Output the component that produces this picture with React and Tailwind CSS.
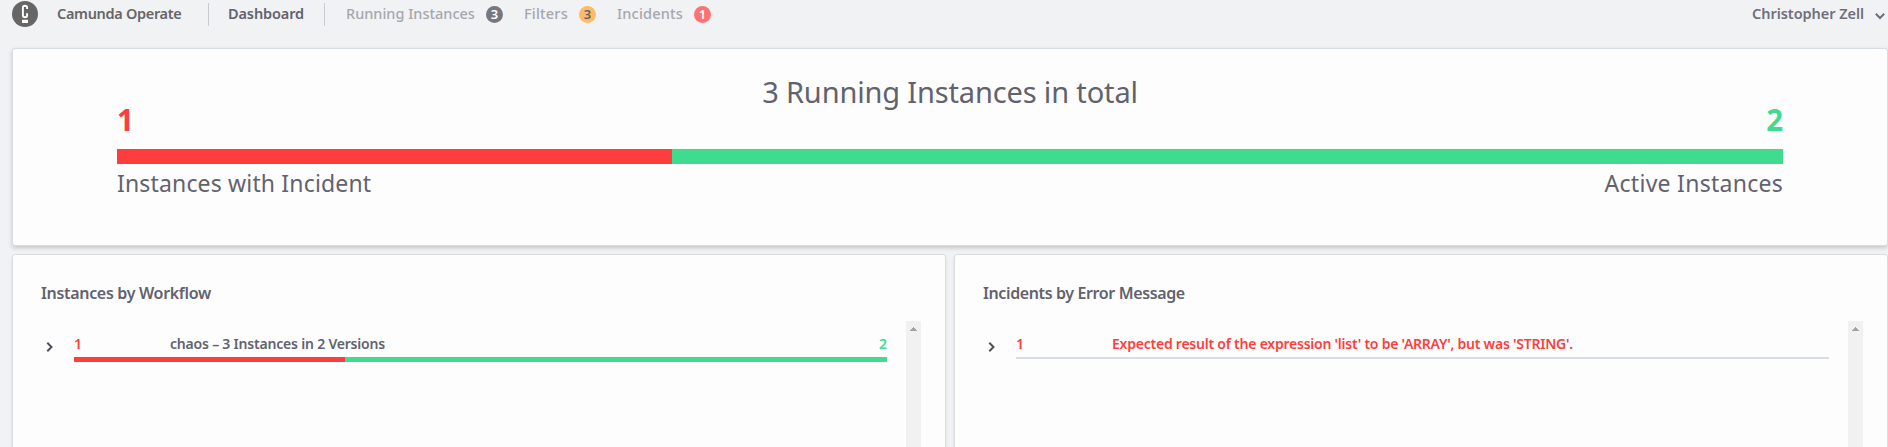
function Logo() {
  return (
    <svg className="ml-3 mt-px size-[26px] shrink-0" viewBox="0 0 26 26" fill="none">
      <circle cx="13" cy="13" r="13" fill="#666666" />
      <path d="M15.1 8V6.6C15.1 5.4 14.4 4.8 13 4.8S10.9 5.4 10.9 6.6V14.2c0 1.3.7 2 2.1 2s2.1-.7 2.1-2V12.2" stroke="#fff" strokeWidth="1.9" />
      <rect x="10" y="18.8" width="6" height="3.2" fill="#fff" />
    </svg>
  );
}

function Chevron({ className, down }) {
  return (
    <svg className={className} viewBox="0 0 10 10" fill="none" stroke="currentColor" strokeWidth="2">
      <path d={down ? "M0.8 2.8L5 7L9.2 2.8" : "M2.3 0.8L6.5 5L2.3 9.2"} />
    </svg>
  );
}

function NavItem({ label, count, width, badge, gap }) {
  return (
    <div className={`flex h-[27px] items-center text-[#a6a7ad] ${gap}`}>
      <span className={`font-medium whitespace-nowrap ${width}`}>{label}</span>
      <span className={`mt-[2px] flex size-[17px] items-center justify-center rounded-full text-[13px] leading-none font-semibold ${badge}`}>
        {count}
      </span>
    </div>
  );
}

function Scrollbar() {
  return (
    <div className="mt-[27px] flex h-[140px] w-[15px] justify-center bg-[#f1f1f1] pt-[6px]">
      <svg className="h-1 w-[7px]" viewBox="0 0 7 4" fill="#a3a3a3" shapeRendering="crispEdges">
        <path d="M3 0h1v1h1v1h1v1h1v1H0V3h1V2h1V1h1z" />
      </svg>
    </div>
  );
}

function Card({ title, titleClass, width, children }) {
  return (
    <section className={`h-[240px] rounded-[3px] border border-[#d8dce3] bg-[#fdfdfe] shadow-[0_2px_3px_rgba(0,0,0,0.1)] ${width}`}>
      <div className="flex pl-7">
        <div className="w-[865px] shrink-0 pt-[25px]">
          <h2 className={`h-[26px] text-base leading-[26px] font-semibold whitespace-nowrap ${titleClass}`}>{title}</h2>
          <div className="mt-[25px] flex pl-[4px]">
            <Chevron className="mt-[11px] mr-[19px] size-[10px] shrink-0 text-[#4f4f59]" />
            {children}
          </div>
        </div>
        <div className="flex pt-[39px]">
          <Scrollbar />
        </div>
      </div>
    </section>
  );
}

export default function App() {
  return (
    <div className="h-[447px] w-full overflow-hidden bg-[#f1f2f4] font-['Noto_Sans',sans-serif] text-[#62626e]">
      <header className="flex h-12 items-start text-[14.5px] leading-[27px]">
        <Logo />
        <span className="ml-[19px] w-[151px] font-semibold tracking-[-0.32px] whitespace-nowrap text-[#666666]">Camunda Operate</span>
        <div className="mt-[3px] h-[23px] w-px bg-[#c9cad0]" />
        <span className="ml-[19px] w-[96px] font-semibold tracking-[-0.12px]">Dashboard</span>
        <div className="mt-[3px] h-[23px] w-px bg-[#c9cad0]" />
        <NavItem label="Running Instances" count={3} gap="ml-[21px]" width="w-[140px]" badge="bg-[#77777f] text-white" />
        <NavItem label="Filters" count={3} gap="ml-[21px]" width="w-[55px] tracking-[0.2px]" badge="bg-[#fdbb67] text-[#62626e]" />
        <NavItem label="Incidents" count={1} gap="ml-[21px]" width="w-[77px] tracking-[0.2px]" badge="bg-[#ff7173] text-white" />
        <div className="ml-auto flex pr-[3px] text-[#6f6f7b]">
          <span className="w-[123px] font-semibold tracking-[-0.05px] whitespace-nowrap">Christopher Zell</span>
          <Chevron down className="mt-[11px] size-[10px]" />
        </div>
      </header>

      <main className="flex flex-col gap-2 pl-3">
        <section className="h-[198px] w-[1876px] rounded-[3px] border border-[#d8dce3] bg-[#fdfdfe] pt-[23px] pr-[104px] pl-[104px] shadow-[0_2px_4px_rgba(0,0,0,0.18)]">
          <h1 className="h-10 text-center text-[29px] leading-10 tracking-[-0.15px]">3 Running Instances in total</h1>
          <div className="-mt-[9px] flex h-[34px] justify-between text-[29.5px] leading-[34px] font-bold">
            <span className="text-[#ff3d3d]">1</span>
            <span className="text-[#3fdb8e]">2</span>
          </div>
          <div className="mt-[12px] flex h-[15px] bg-[#3fdb8e]">
            <div className="w-1/3 bg-[#ff3d3d]" />
          </div>
          <div className="mt-[3px] flex h-8 justify-between text-[23px] leading-8">
            <span className="tracking-[0.16px]">Instances with Incident</span>
            <span className="tracking-[0.27px]">Active Instances</span>
          </div>
        </section>

        <div className="flex gap-[8px]">
          <Card title="Instances by Workflow" titleClass="tracking-[-0.32px]" width="w-[934px]">
            <div className="w-[813px]">
              <div className="flex h-[26px] text-sm leading-[25px] font-semibold whitespace-nowrap">
                <span className="w-[96px] text-[#ff3d3d]">1</span>
                <span className="grow tracking-[-0.2px]">chaos – 3 Instances in 2 Versions</span>
                <span className="text-[#3fdb8e]">2</span>
              </div>
              <div className="flex h-[5px] bg-[#3fdb8e]">
                <div className="w-1/3 bg-[#ff3d3d]" />
              </div>
            </div>
          </Card>
          <Card title="Incidents by Error Message" titleClass="tracking-[-0.38px]" width="w-[934px]">
            <div className="w-[813px]">
              <div className="flex h-[26px] text-sm leading-[25px] font-semibold whitespace-nowrap text-[#ff3d3d]">
                <span className="w-[96px]">1</span>
                <span className="tracking-[-0.23px]">Expected result of the expression 'list' to be 'ARRAY', but was 'STRING'.</span>
              </div>
              <div className="h-[2px] bg-[#d8dce3]" />
            </div>
          </Card>
        </div>
      </main>
    </div>
  );
}
